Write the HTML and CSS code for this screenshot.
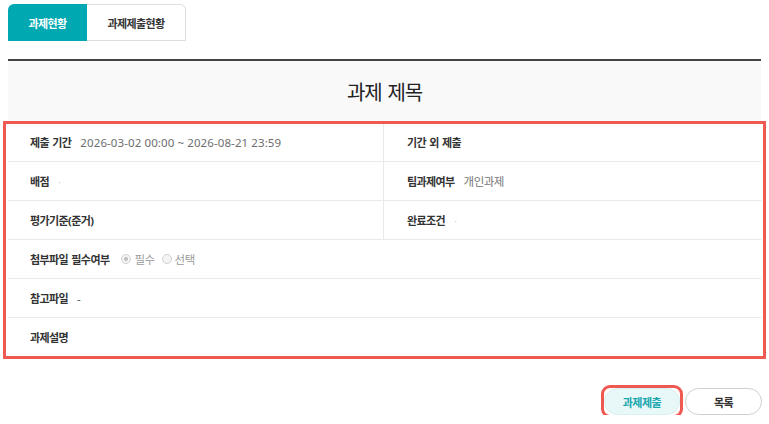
FILE: index.html
```html
<!DOCTYPE html>
<html lang="ko">
<head>
<meta charset="utf-8">
<title>과제 제목</title>
<link rel="stylesheet" href="styles.css">
</head>
<body>
<div class="wrap">
  <div class="tabs">
    <div class="tab tab-active">과제현황</div>
    <div class="tab tab-plain">과제제출현황</div>
  </div>

  <div class="board">
    <div class="title">과제 제목</div>
    <div class="table">
      <div class="row row-split">
        <div class="cell"><span class="label">제출 기간</span><span class="value date">2026-03-02 00:00 ~ 2026-08-21 23:59</span></div>
        <div class="cell cell-right"><span class="label">기간 외 제출</span></div>
      </div>
      <div class="row row-split">
        <div class="cell"><span class="label">배점</span><span class="value faint">·</span></div>
        <div class="cell cell-right"><span class="label">팀과제여부</span><span class="value">개인과제</span></div>
      </div>
      <div class="row row-split">
        <div class="cell"><span class="label">평가기준(준거)</span></div>
        <div class="cell cell-right"><span class="label">완료조건</span><span class="value faint">·</span></div>
      </div>
      <div class="row">
        <div class="cell">
          <span class="label">첨부파일 필수여부</span>
          <span class="radio-group">
            <span class="radio radio-on"></span><span class="radio-text">필수</span>
            <span class="radio"></span><span class="radio-text">선택</span>
          </span>
        </div>
      </div>
      <div class="row">
        <div class="cell"><span class="label">참고파일</span><span class="value dash">-</span></div>
      </div>
      <div class="row">
        <div class="cell"><span class="label">과제설명</span></div>
      </div>
      <div class="highlight"></div>
    </div>
  </div>

  <div class="actions">
    <div class="btn-wrap">
      <button class="btn btn-submit">과제제출</button>
      <div class="btn-highlight"></div>
    </div>
    <button class="btn btn-list">목록</button>
  </div>
</div>
</body>
</html>
```

FILE: styles.css
```css
* {
  box-sizing: border-box;
}

body {
  margin: 0;
  background: #ffffff;
  font-family: "Noto Sans", "Noto Sans CJK KR", sans-serif;
  color: #333333;
}

.wrap {
  padding: 4px 8px 0 8px;
}

/* tabs */
.tabs {
  display: flex;
  height: 37px;
}

.tab {
  display: flex;
  align-items: center;
  justify-content: center;
  font-size: 11px;
  font-weight: 700;
  letter-spacing: -0.6px;
}

.tab-active {
  width: 79px;
  background: #00a9b1;
  color: #ffffff;
  border-radius: 6px 0 0 0;
}

.tab-plain {
  width: 99px;
  color: #333333;
  border: 1px solid #dedede;
  border-left: none;
  border-radius: 0 6px 0 0;
}

/* board */
.board {
  margin-top: 18px;
  border-top: 2px solid #444444;
}

.title {
  height: 62px;
  background: #f9f9f9;
  display: flex;
  align-items: center;
  justify-content: center;
  font-size: 20px;
  letter-spacing: -1.2px;
  word-spacing: 2px;
  color: #222222;
  padding-bottom: 1px;
}

.table {
  position: relative;
}

.row {
  height: 39px;
  border-bottom: 1px solid #e9e9e9;
  display: grid;
  grid-template-columns: 1fr;
}

.row-split {
  grid-template-columns: 375px 1fr;
}

.cell {
  display: flex;
  align-items: center;
  padding-left: 22px;
}

.cell-right {
  border-left: 1px solid #e9e9e9;
  padding-left: 23px;
}

.label {
  font-size: 11px;
  font-weight: 700;
  letter-spacing: -0.6px;
  word-spacing: 1px;
  color: #333333;
  margin-right: 9px;
}

.value {
  font-size: 11.5px;
  color: #777777;
  letter-spacing: -0.5px;
}

.date {
  letter-spacing: 0.1px;
  color: #6e6e6e;
}

.faint {
  color: #d8d8d8;
}

.dash {
  color: #555555;
}

.radio-group {
  display: flex;
  align-items: center;
  font-size: 11.5px;
  color: #9a9a9a;
  letter-spacing: -0.5px;
  margin-left: 3px;
}

.radio {
  width: 10px;
  height: 10px;
  border-radius: 50%;
  border: 1px solid #d2d2d2;
  background: #f4f4f4;
  position: relative;
  margin-right: 3px;
}

.radio-on::after {
  content: "";
  position: absolute;
  left: 2px;
  top: 2px;
  width: 4px;
  height: 4px;
  border-radius: 50%;
  background: #bdbdbd;
}

.radio-text {
  margin-right: 7px;
}

.highlight {
  position: absolute;
  top: -2px;
  left: -5px;
  right: -5px;
  bottom: -2px;
  border: 3px solid #ee5a52;
  pointer-events: none;
}

/* buttons */
.actions {
  display: flex;
  justify-content: flex-end;
  gap: 5px;
  margin-top: 31px;
  margin-right: -1px;
}

.btn-wrap {
  position: relative;
}

.btn {
  height: 27px;
  border-radius: 14px;
  font-family: "Noto Sans", "Noto Sans CJK KR", sans-serif;
  font-size: 11px;
  font-weight: 700;
  letter-spacing: -0.5px;
  padding: 0;
  cursor: pointer;
}

.btn-submit {
  width: 76px;
  background: #e8f7f8;
  border: 1px solid #d9eff0;
  color: #1aa6ae;
}

.btn-list {
  width: 77px;
  background: #ffffff;
  border: 1px solid #cfcfcf;
  color: #333333;
}

.btn-highlight {
  position: absolute;
  top: -3px;
  left: -3px;
  right: -3px;
  bottom: -3px;
  border: 3px solid #ee5a52;
  border-radius: 9px;
  pointer-events: none;
}
```
